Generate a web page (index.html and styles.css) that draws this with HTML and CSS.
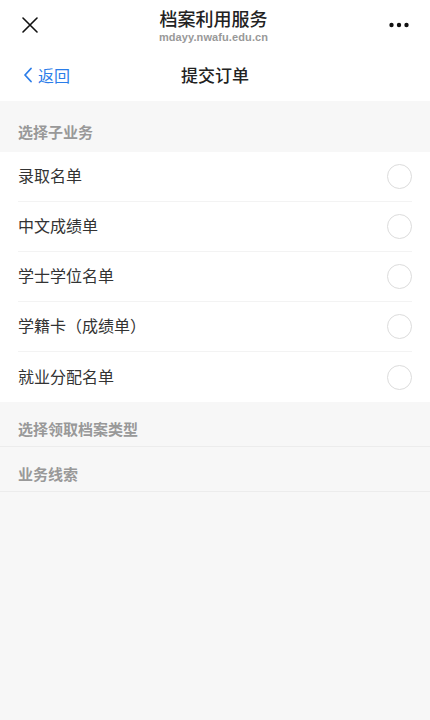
FILE: index.html
```html
<!DOCTYPE html>
<html lang="zh-CN">
<head>
<meta charset="utf-8">
<title>提交订单</title>
<link rel="stylesheet" href="styles.css">
</head>
<body>
<div class="topbar">
  <svg class="close" width="16" height="16" viewBox="0 0 16 16"><path d="M1 1L15 15M15 1L1 15" stroke="#111" stroke-width="1.6" fill="none" stroke-linecap="round"/></svg>
  <div class="site">
    <div class="site-title">档案利用服务</div>
    <div class="site-url">mdayy.nwafu.edu.cn</div>
  </div>
  <svg class="more" width="20" height="6" viewBox="0 0 20 6"><circle cx="2.5" cy="3" r="2.2" fill="#111"/><circle cx="10" cy="3" r="2.2" fill="#111"/><circle cx="17.5" cy="3" r="2.2" fill="#111"/></svg>
</div>
<div class="navbar">
  <div class="back">
    <svg width="10" height="16" viewBox="0 0 10 16"><path d="M8 1.5L2 8L8 14.5" stroke="#2b7de9" stroke-width="1.8" fill="none" stroke-linecap="round" stroke-linejoin="round"/></svg>
    <span>返回</span>
  </div>
  <div class="nav-title">提交订单</div>
</div>
<div class="content">
  <div class="section-head first">选择子业务</div>
  <div class="list">
    <div class="row"><span class="label">录取名单</span><span class="radio"></span></div>
    <div class="row"><span class="label">中文成绩单</span><span class="radio"></span></div>
    <div class="row"><span class="label">学士学位名单</span><span class="radio"></span></div>
    <div class="row"><span class="label">学籍卡（成绩单）</span><span class="radio"></span></div>
    <div class="row"><span class="label">就业分配名单</span><span class="radio"></span></div>
  </div>
  <div class="section-head bordered">选择领取档案类型</div>
  <div class="section-head bordered">业务线索</div>
</div>
</body>
</html>
```
FILE: styles.css
```css
* { box-sizing: border-box; }
html, body { margin: 0; padding: 0; }
body {
  width: 430px;
  height: 720px;
  background: #f7f7f7;
  font-family: "Noto Sans CJK SC", "Noto Sans", sans-serif;
  color: #333;
  overflow: hidden;
}
.topbar {
  height: 50px;
  background: #fff;
  display: flex;
  align-items: center;
  justify-content: space-between;
  padding: 0 21px 0 22px;
}
.close { display: block; }
.more { display: block; }
.site {
  display: flex;
  flex-direction: column;
  align-items: center;
  padding-bottom: 1px;
}
.site-title {
  font-size: 18px;
  line-height: 22px;
  color: #222;
  font-weight: 500;
}
.site-url {
  font-family: "Liberation Sans", Arial, sans-serif;
  font-size: 11px;
  line-height: 11px;
  margin-top: 3px;
  color: #999;
  font-weight: bold;
  letter-spacing: 0.1px;
}
.navbar {
  height: 51px;
  background: #fff;
  display: flex;
  align-items: center;
  justify-content: center;
  position: relative;
  padding-bottom: 2px;
}
.back {
  position: absolute;
  left: 23px;
  top: 0;
  height: 49px;
  display: flex;
  align-items: center;
  gap: 5px;
  color: #2b7de9;
  font-size: 16px;
}
.back svg { display: block; margin-top: 1px; }
.nav-title {
  font-size: 17px;
  font-weight: 500;
  color: #222;
}
.section-head {
  font-size: 15px;
  line-height: 20px;
  font-weight: bold;
  color: #999;
  padding: 17px 18px 7px;
  background: #f7f7f7;
}
.section-head.first {
  padding: 21px 18px 10px;
}
.section-head.bordered {
  border-bottom: 1px solid #ececec;
}
.list {
  background: #fff;
  padding: 0 18px;
}
.row {
  height: 50px;
  display: flex;
  align-items: center;
  justify-content: space-between;
  font-size: 16px;
  color: #333;
  border-bottom: 1px solid #f3f3f3;
}
.row:last-child { border-bottom: none; }
.label {
  line-height: 20px;
  margin-top: -3px;
}
.radio {
  width: 25px;
  height: 25px;
  border: 1px solid #dcdcdc;
  border-radius: 50%;
}
```
